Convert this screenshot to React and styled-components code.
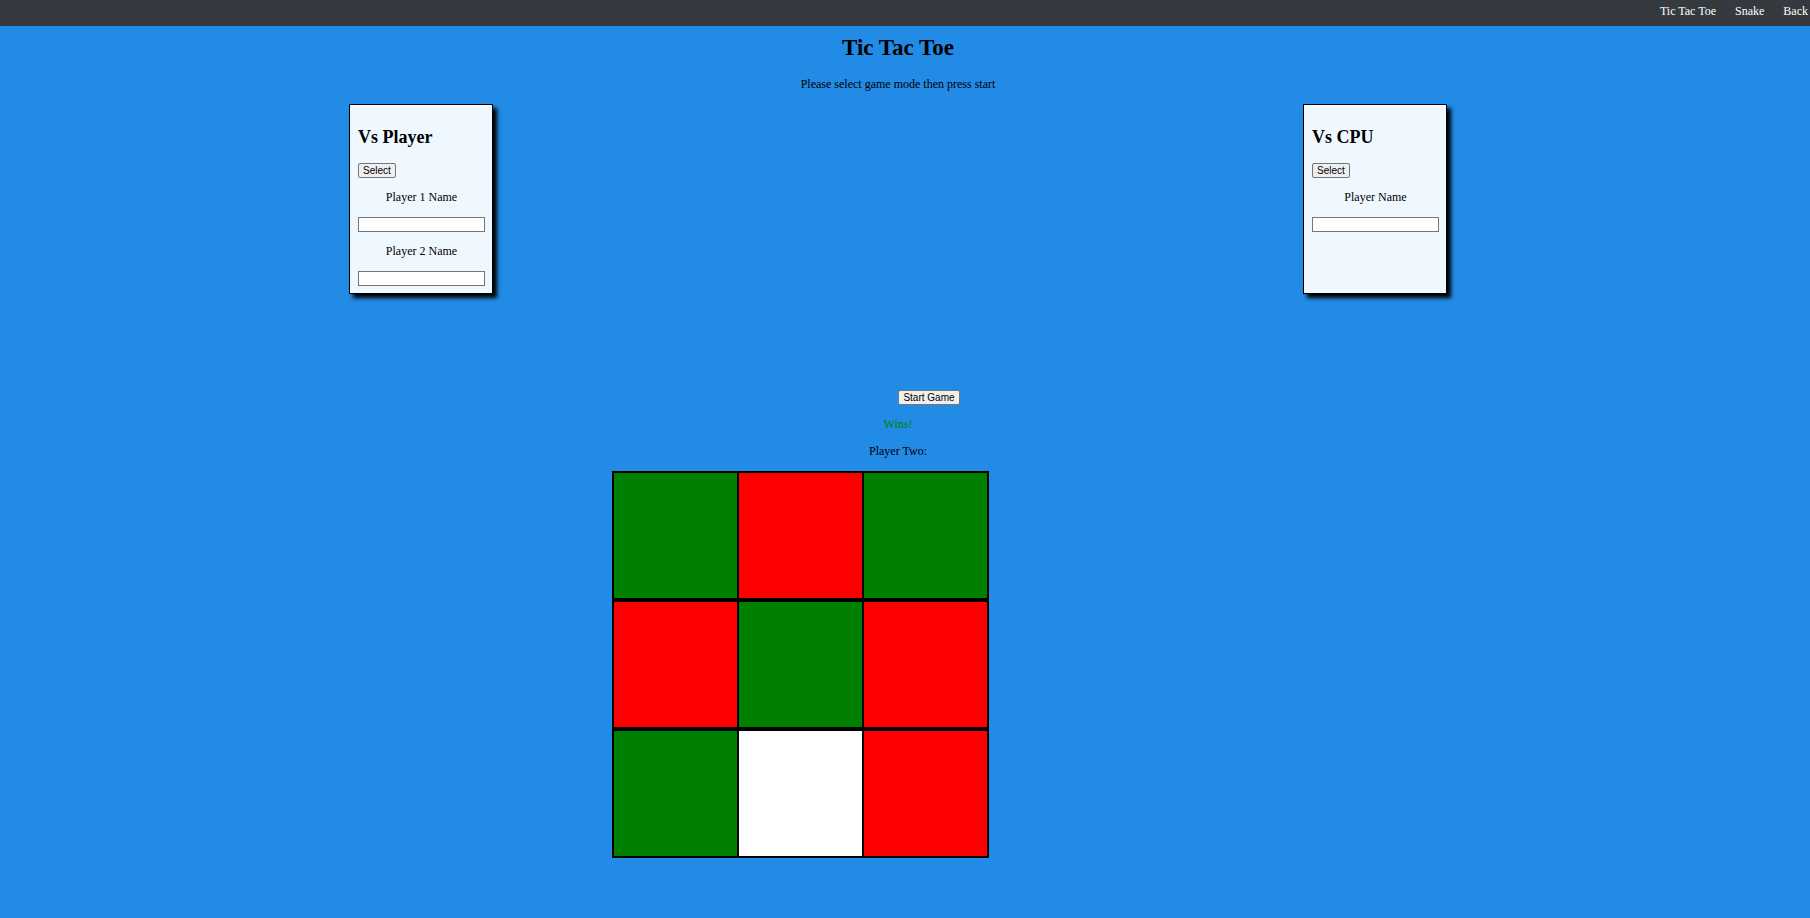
import React from "react";
import styled, { createGlobalStyle } from "styled-components";

const Global = createGlobalStyle`
  html, body { margin: 0; padding: 0; }
  body {
    background: #228be6;
    font-family: "Liberation Serif", "Times New Roman", serif;
    font-size: 12px;
    color: #000;
    min-height: 918px;
  }
`;

const Nav = styled.nav`
  height: 26px;
  box-sizing: border-box;
  background: #343a40;
  display: flex;
  justify-content: flex-end;
  align-items: flex-start;
  gap: 19px;
  padding: 4px 2px 0 0;
`;

const NavLink = styled.a`
  color: #fff;
  text-decoration: none;
  font-size: 12px;
  line-height: 14px;
`;

const Main = styled.main`
  width: 1796px;
  display: flex;
  flex-direction: column;
  align-items: stretch;
`;

const Title = styled.h1`
  margin: 9px 0 0;
  font-size: 23px;
  line-height: 26px;
  font-weight: bold;
  text-align: center;
`;

const Text = styled.p`
  margin: ${(p) => p.$mt || 0}px 0 0;
  font-size: 12px;
  line-height: 14px;
  text-align: center;
  color: ${(p) => p.$color || "#000"};
  padding-left: ${(p) => p.$shift || 0}px;
`;

const CardRow = styled.div`
  margin-top: 13px;
  display: flex;
  justify-content: space-between;
  padding: 0 349px;
`;

const Card = styled.section`
  width: 144px;
  height: 190px;
  box-sizing: border-box;
  background: #f0f8ff;
  border: 1px solid #000;
  box-shadow: 4px 4px 4px #000;
  padding: 7px 7px 7px 8px;
  display: flex;
  flex-direction: column;
  align-items: flex-start;
`;

const CardTitle = styled.h2`
  margin: 15px 0;
  font-size: 18px;
  line-height: 21px;
  font-weight: bold;
`;

const Label = styled.p`
  align-self: stretch;
  margin: 12px 0 13px;
  font-size: 12px;
  line-height: 14px;
  text-align: center;
`;

const Button = styled.button`
  font-family: "Liberation Sans", Arial, sans-serif;
  font-size: 10px;
  line-height: 11px;
  height: 15px;
  padding: 1px 4px;
  box-sizing: border-box;
  border: 1px solid #767676;
  border-radius: 2px;
  background: #efefef;
  color: #000;
  margin: 0;
`;

const Input = styled.input`
  width: 127px;
  height: 15px;
  box-sizing: border-box;
  border: 1px solid #767676;
  background: #fff;
  margin: 0;
  padding: 0 2px;
  font-size: 10px;
`;

const ButtonRow = styled.div`
  margin-top: 96px;
  display: flex;
  justify-content: center;
  padding-left: 62px;
`;

const Board = styled.div`
  margin: 13px 0 0 612px;
  width: max-content;
  display: grid;
  grid-template-columns: repeat(3, 123px);
  grid-template-rows: 125px 125px 125px;
  column-gap: 2px;
  row-gap: 4px;
  border: 2px solid #000;
  background: #000;
`;

const Cell = styled.div`
  background: ${(p) => p.$color};
`;

const COLORS = { g: "#008000", r: "#ff0000", w: "#ffffff" };
const cells = ["g", "r", "g", "r", "g", "r", "g", "w", "r"];

export default function App() {
  return (
    <>
      <Global />
      <Nav>
        <NavLink href="#">Tic Tac Toe</NavLink>
        <NavLink href="#">Snake</NavLink>
        <NavLink href="#">Back</NavLink>
      </Nav>
      <Main>
        <Title>Tic Tac Toe</Title>
        <Text $mt={16}>Please select game mode then press start</Text>
        <CardRow>
          <Card>
            <CardTitle>Vs Player</CardTitle>
            <Button>Select</Button>
            <Label>Player 1 Name</Label>
            <Input type="text" />
            <Label>Player 2 Name</Label>
            <Input type="text" />
          </Card>
          <Card>
            <CardTitle>Vs CPU</CardTitle>
            <Button>Select</Button>
            <Label>Player Name</Label>
            <Input type="text" />
          </Card>
        </CardRow>
        <ButtonRow>
          <Button>Start Game</Button>
        </ButtonRow>
        <Text $mt={12} $color="#008000"> Wins!</Text>
        <Text $mt={13}>Player Two: </Text>
        <Board>
          {cells.map((c, i) => (
            <Cell key={i} $color={COLORS[c]} />
          ))}
        </Board>
      </Main>
    </>
  );
}
